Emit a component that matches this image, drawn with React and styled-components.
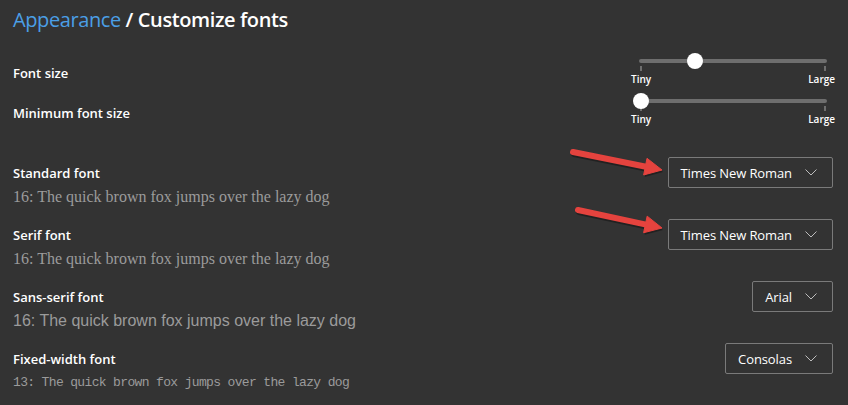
import React from "react";
import styled, { createGlobalStyle } from "styled-components";

const Global = createGlobalStyle`
  html, body { margin: 0; padding: 0; background: #333333; }
  body { font-family: "Open Sans", "Noto Sans", sans-serif; }
`;

const Page = styled.div`
  position: relative;
  width: 848px;
  height: 405px;
  box-sizing: border-box;
  padding: 6px 15px 0 13px;
  background: #333333;
  color: #ffffff;
  overflow: hidden;
`;

const Title = styled.h1`
  margin: 0;
  font-size: 20px;
  line-height: 28px;
  font-weight: 600;
  letter-spacing: -0.4px;
  color: #ffffff;
`;

const Crumb = styled.span`
  color: #4b9fe6;
  font-weight: 500;
`;

const SliderList = styled.div`
  display: flex;
  flex-direction: column;
  gap: 8px;
  margin-top: 19px;
`;

const SliderRow = styled.div`
  display: flex;
  justify-content: space-between;
  align-items: flex-start;
`;

const Label = styled.div`
  font-size: 13px;
  line-height: 18px;
  font-weight: 600;
  color: #ffffff;
  margin-top: ${(p) => p.$top || 0}px;
`;

const Slider = styled.div`
  width: 188px;
  margin-right: 6px;
  display: flex;
  flex-direction: column;
`;

const TrackArea = styled.div`
  position: relative;
  height: 16px;
`;

const Track = styled.div`
  position: absolute;
  left: 0;
  right: 0;
  top: 6px;
  height: 4px;
  border-radius: 2px;
  background: #6e6e6e;
`;

const Thumb = styled.div`
  position: absolute;
  top: 0;
  width: 16px;
  height: 16px;
  margin-left: -8px;
  border-radius: 50%;
  background: #ffffff;
`;

const Ticks = styled.div`
  display: flex;
  justify-content: space-between;
  margin-top: -3px;
  padding: 0 1px;
`;

const Tick = styled.span`
  width: 2px;
  height: 5px;
  background: #6e6e6e;
`;

const SliderLabels = styled.div`
  display: flex;
  justify-content: space-between;
  margin: 2px -8px 0 -8px;
  font-size: 10px;
  line-height: 12px;
  font-weight: 600;
  color: #ffffff;
`;

const FontList = styled.div`
  display: flex;
  flex-direction: column;
  gap: 13px;
  margin-top: 32px;
`;

const FontRow = styled.div`
  display: flex;
  flex-direction: column;
`;

const FontHeader = styled.div`
  display: flex;
  justify-content: space-between;
  align-items: center;
  height: 31px;
`;

const Sample = styled.div`
  font-family: ${(p) => p.$family};
  font-size: ${(p) => p.$size}px;
  letter-spacing: ${(p) => p.$spacing || 0}px;
  line-height: 18px;
  color: #9b9b9b;
  white-space: nowrap;
`;

const Select = styled.div`
  display: flex;
  align-items: center;
  gap: 13px;
  height: 31px;
  box-sizing: border-box;
  padding: 0 15px 0 12px;
  border: 1px solid #7a7a7a;
  border-radius: 2px;
  font-size: 13px;
  letter-spacing: -0.1px;
  color: #ffffff;
  white-space: nowrap;
`;

const Chevron = () => (
  <svg width="12" height="7" viewBox="0 0 12 7" fill="none">
    <path d="M0.5 0.5 L6 6 L11.5 0.5" stroke="#bdbdbd" strokeWidth="1" />
  </svg>
);

const Overlay = styled.svg`
  position: absolute;
  left: 0;
  top: 0;
  pointer-events: none;
`;

const Arrow = ({ x1, y1, x2, y2 }) => {
  const dx = x2 - x1;
  const dy = y2 - y1;
  const len = Math.hypot(dx, dy);
  const ux = dx / len;
  const uy = dy / len;
  const hl = 17;
  const hw = 8.5;
  const bx = x2 - ux * hl;
  const by = y2 - uy * hl;
  const px = -uy * hw;
  const py = ux * hw;
  const head = `${x2},${y2} ${bx + px},${by + py} ${bx - px},${by - py}`;
  return (
    <g>
      <g opacity="0.35" transform="translate(1,2)">
        <line x1={x1} y1={y1} x2={bx + ux * 2} y2={by + uy * 2} stroke="#000" strokeWidth="6" strokeLinecap="round" />
        <polygon points={head} fill="#000" />
      </g>
      <line x1={x1} y1={y1} x2={bx + ux * 2} y2={by + uy * 2} stroke="#e5433e" strokeWidth="6" strokeLinecap="round" />
      <polygon points={head} fill="#e5433e" strokeLinejoin="round" stroke="#e5433e" strokeWidth="1" />
    </g>
  );
};

const SliderControl = ({ pos }) => (
  <Slider>
    <TrackArea>
      <Track />
      <Thumb style={{ left: `${pos}%` }} />
    </TrackArea>
    <Ticks>
      <Tick />
      <Tick />
    </Ticks>
    <SliderLabels>
      <span>Tiny</span>
      <span>Large</span>
    </SliderLabels>
  </Slider>
);

const fonts = [
  { label: "Standard font", value: "Times New Roman", family: '"Liberation Serif", "Times New Roman", serif', size: 16, text: "16: The quick brown fox jumps over the lazy dog" },
  { label: "Serif font", value: "Times New Roman", family: '"Liberation Serif", "Times New Roman", serif', size: 16, text: "16: The quick brown fox jumps over the lazy dog" },
  { label: "Sans-serif font", value: "Arial", family: '"Liberation Sans", Arial, sans-serif', size: 16, text: "16: The quick brown fox jumps over the lazy dog" },
  { label: "Fixed-width font", value: "Consolas", family: '"Liberation Mono", "DejaVu Sans Mono", monospace', size: 13, spacing: -0.65, text: "13: The quick brown fox jumps over the lazy dog" },
];

export default function App() {
  return (
    <>
      <Global />
      <Page>
        <Title>
          <Crumb>Appearance</Crumb> / Customize fonts
        </Title>
        <SliderList>
          <SliderRow>
            <Label $top={11}>Font size</Label>
            <SliderControl pos={30} />
          </SliderRow>
          <SliderRow>
            <Label $top={11}>Minimum font size</Label>
            <SliderControl pos={1} />
          </SliderRow>
        </SliderList>
        <FontList>
          {fonts.map((f, i) => (
            <FontRow key={i}>
              <FontHeader>
                <Label>{f.label}</Label>
                <Select>
                  <span>{f.value}</span>
                  <Chevron />
                </Select>
              </FontHeader>
              <Sample $family={f.family} $size={f.size} $spacing={f.spacing}>
                {f.text}
              </Sample>
            </FontRow>
          ))}
        </FontList>
        <Overlay width="848" height="405" viewBox="0 0 848 405">
          <Arrow x1={573} y1={152} x2={662} y2={170} />
          <Arrow x1={578} y1={210} x2={662} y2={228} />
        </Overlay>
      </Page>
    </>
  );
}
